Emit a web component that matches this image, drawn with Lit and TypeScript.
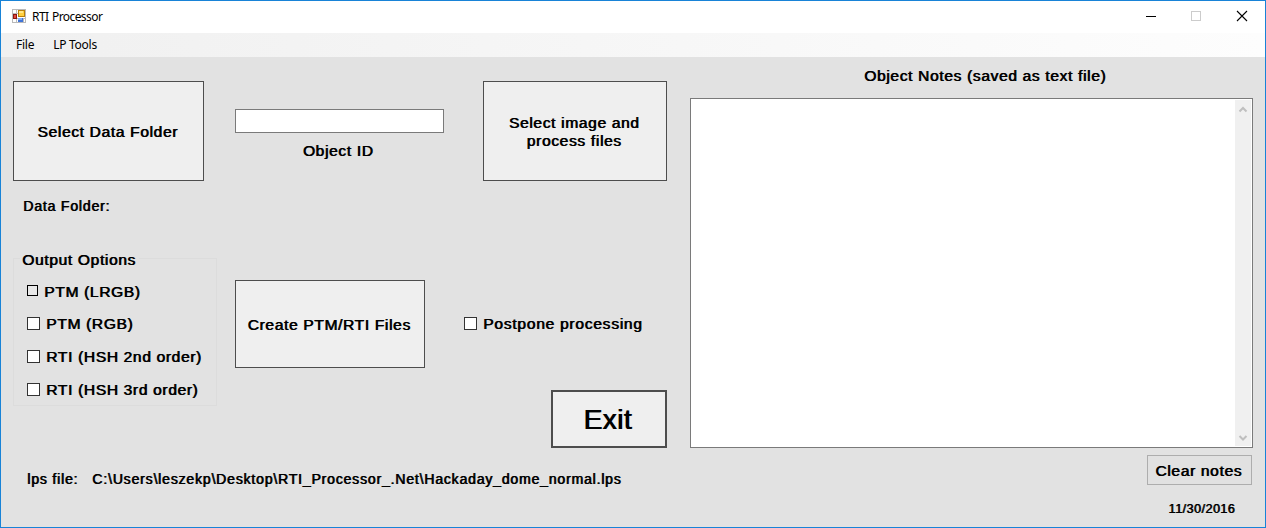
import { LitElement, html, css, svg } from "lit";
import { customElement, property } from "lit/decorators.js";

@customElement("check-option")
class CheckOption extends LitElement {
  @property() label = "";
  @property({ type: Boolean }) flat = false;

  static styles = css`
    :host { display: flex; align-items: flex-start; height: 18px; white-space: nowrap; }
    .box { box-sizing: border-box; width: 13px; height: 13px; margin-top: 2px; background: #fff; border: 1px solid #333; }
    .flat { width: 11px; height: 11px; background: #e8e8e8; border-color: #000; }
    .text { margin-left: 6px; line-height: 18px; }
  `;

  render() {
    return html`<span class="box ${this.flat ? "flat" : ""}"></span><span class="text">${this.label}</span>`;
  }
}

const appIcon = svg`
  <rect x="0.5" y="0.5" width="13" height="13" fill="#fff" stroke="#b9b9b9"/>
  <path d="M0 4.500h6M4.500 0v14M5 9.500h9M11.500 9v5" stroke="#b9b9b9" fill="none"/>
  <rect x="1" y="5" width="4" height="5" fill="#8d1512"/>
  <rect x="2" y="6" width="2" height="3" fill="#e04a3c"/>
  <rect x="6" y="1" width="7" height="7" fill="#b87f0b"/>
  <rect x="7" y="2" width="5" height="5" fill="#ffd040"/>
  <rect x="7" y="2" width="4" height="2" fill="#ffe68a"/>
  <rect x="6" y="9" width="5" height="4" fill="#3f74d8"/>
  <rect x="6" y="9" width="4" height="2" fill="#7fabf5"/>`;

@customElement("app-root")
class AppRoot extends LitElement {
  static styles = css`
    * { box-sizing: border-box; }
    :host {
      display: flex; flex-direction: column; box-sizing: border-box;
      width: 100%; height: 100vh; overflow: hidden;
      border: 1px solid #1883d7; background: #e2e2e2; color: #000;
      font: 15.5px "Liberation Sans", Arial, sans-serif;
      letter-spacing: 0.68px; text-shadow: 0.75px 0 0 #000; white-space: nowrap;
    }
    .titlebar, .menubar {
      display: flex; flex: none; font: 12px "Noto Sans", "Open Sans", sans-serif;
      letter-spacing: -0.52px; text-shadow: none;
    }
    .titlebar { height: 32px; background: #fff; }
    .app-icon { margin: 8px 6px 0 11px; width: 14px; height: 14px; }
    .title { flex: 1; line-height: 32px; word-spacing: 1px; letter-spacing: -0.58px; }
    .controls { display: block; width: 119px; height: 32px; }
    .menubar { height: 24px; gap: 19px; padding-left: 15px; line-height: 24px; letter-spacing: -0.26px; background: linear-gradient(90deg, #f0f0f0, #fdfdfd); }
    .content { flex: 1; display: grid; grid-template-columns: 654px 563px; column-gap: 23px; padding-left: 12px; }
    .left, .right { display: flex; flex-direction: column; }
    .left { padding-top: 24px; }
    .row { display: flex; align-items: flex-start; justify-content: space-between; height: 100px; }
    button {
      display: flex; align-items: center; justify-content: center; margin: 0; padding: 2px 2px 0 0;
      border: 1px solid #4d4d4d; border-radius: 0; background: #efefef; color: #000;
      font: inherit; letter-spacing: inherit; text-shadow: inherit; line-height: 18px;
    }
    .select-folder { width: 191px; height: 100px; }
    .select-files { width: 184px; height: 100px; }
    .object { width: 209px; margin: 28px 8px 0 0; text-align: center; }
    .object input { display: block; width: 209px; height: 24px; border: 1px solid #7a7a7a; background: #fff; margin: 0 0 9px; outline: 0; }
    .object label { display: block; line-height: 18px; padding-right: 3px; }
    .small { font-size: 14px; letter-spacing: 0.83px; line-height: 16px; }
    .folder { margin: 17px 0 0 10px; }
    .middle { display: grid; grid-template-columns: 204px 190px 203px; column-gap: 18px; margin-top: 35px; height: 199px; }
    .options { height: 157px; margin: 0; padding: 0 0 0 13px; border: 1px solid #dcdcdc; min-width: 0; }
    .options legend { height: 18px; margin-left: -7px; padding: 2px 3px 0 2px; line-height: 18px; }
    .list { display: flex; flex-direction: column; gap: 15px; padding-top: 16px; }
    .list .tight { margin-bottom: -1px; }
    .create { width: 190px; height: 88px; margin-top: 31px; }
    .side { display: flex; flex-direction: column; justify-content: space-between; align-items: flex-end; width: 224px; padding-top: 66px; }
    .side check-option { align-self: flex-start; margin-left: 21px; letter-spacing: 0.77px; }
    .exit { width: 116px; height: 58px; border-width: 2px; font-size: 28px; padding: 2px 3px 0 0; text-shadow: 1px 0 0 #000; letter-spacing: 0.5px; }
    .path { display: flex; gap: 14px; margin: 23px 0 0 14px; }
    .right { padding-top: 10px; align-items: flex-end; }
    .heading { align-self: center; line-height: 18px; padding-left: 27px; }
    .notes { display: flex; justify-content: flex-end; width: 563px; height: 350px; margin-top: 13px; border: 1px solid #7a7a7a; background: #fff; padding: 1px; }
    .scroll { display: flex; flex-direction: column; justify-content: space-between; width: 16px; background: #f0f0f0; }
    .scroll svg { display: block; width: 16px; height: 17px; }
    .clear { width: 105px; height: 30px; margin: 7px 1px 0 0; border-color: #adadad; background: #e1e1e1; }
    .date { margin: 16px 18px 0 0; font-size: 12.5px; letter-spacing: 0.5px; line-height: 16px; }
  `;

  render() {
    return html`
      <header class="titlebar">
        <svg class="app-icon" viewBox="0 0 14 14" shape-rendering="crispEdges">${appIcon}</svg>
        <span class="title">RTI Processor</span>
        <svg class="controls" viewBox="0 0 119 32">
          <path d="M0 15.500h10" stroke="#000"/>
          <rect x="45.500" y="10.500" width="9" height="9" fill="none" stroke="#ccc"/>
          <path d="M91 10l10 10M101 10l-10 10" stroke="#000" stroke-width="1.100"/>
        </svg>
      </header>
      <nav class="menubar"><span>File</span><span>LP Tools</span></nav>
      <main class="content">
        <section class="left">
          <div class="row">
            <button class="select-folder">Select Data Folder</button>
            <div class="object"><input aria-label="Object ID"><label>Object ID</label></div>
            <button class="select-files">Select image and<br>process files</button>
          </div>
          <div class="small folder">Data Folder:</div>
          <div class="middle">
            <fieldset class="options">
              <legend>Output Options</legend>
              <div class="list">
                <check-option class="tight" flat label="PTM (LRGB)"></check-option>
                <check-option label="PTM (RGB)"></check-option>
                <check-option label="RTI (HSH 2nd order)"></check-option>
                <check-option label="RTI (HSH 3rd order)"></check-option>
              </div>
            </fieldset>
            <button class="create">Create PTM/RTI Files</button>
            <div class="side">
              <check-option label="Postpone processing"></check-option>
              <button class="exit">Exit</button>
            </div>
          </div>
          <div class="small path"><span>lps file:</span><span>C:\\Users\\leszekp\\Desktop\\RTI_Processor_.Net\\Hackaday_dome_normal.lps</span></div>
        </section>
        <section class="right">
          <div class="heading">Object Notes (saved as text file)</div>
          <div class="notes">
            <div class="scroll">
              <svg viewBox="0 0 16 17"><path d="M4.500 11.500l3.500-3.500 3.500 3.500" fill="none" stroke="#bfbfbf" stroke-width="2"/></svg>
              <svg viewBox="0 0 16 17"><path d="M4.500 7l3.500 3.500 3.500-3.500" fill="none" stroke="#bfbfbf" stroke-width="2"/></svg>
            </div>
          </div>
          <button class="clear">Clear notes</button>
          <div class="date">11/30/2016</div>
        </section>
      </main>`;
  }
}
